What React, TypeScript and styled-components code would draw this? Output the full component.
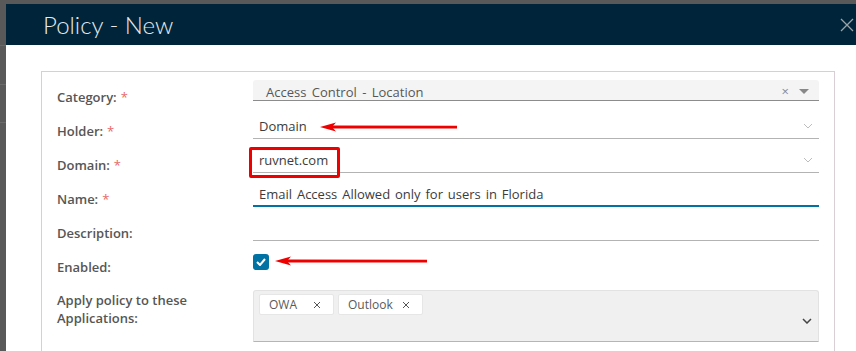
import React from "react";
import styled, { createGlobalStyle } from "styled-components";

const Global = createGlobalStyle`
  html, body { margin: 0; padding: 0; background: #595959; overflow: hidden; }
  body { font-family: "Open Sans", "Noto Sans", sans-serif; }
  #root { height: 351px; }
`;

const Page = styled.div`
  display: flex;
  height: 351px;
  padding-top: 4px;
  box-sizing: border-box;
`;

const Backdrop = styled.div`
  width: 6px;
  flex: none;
  display: flex;
  flex-direction: column;
`;

const BackLine = styled.div<{ $h: number }>`
  height: ${(p) => p.$h}px;
  border-bottom: 1px solid #6a6a6a;
  flex: none;
`;

const Modal = styled.div`
  flex: 1;
  background: #fff;
  display: flex;
  flex-direction: column;
  overflow: hidden;
`;

const Header = styled.div`
  height: 41px;
  flex: none;
  background: #00253a;
  display: flex;
  align-items: center;
  justify-content: space-between;
  padding: 0 2px 0 37px;
`;

const Title = styled.h1`
  margin: 0;
  font-family: Lato, "Noto Sans", sans-serif;
  font-weight: 300;
  font-size: 24px;
  color: #e6e9eb;
`;

const Body = styled.div`
  padding: 26px 21px 0 35px;
  flex: 1;
`;

const Panel = styled.div`
  border: 1px solid #d9ced3;
  border-bottom: none;
  padding: 8px 14px 0 15px;
  height: 300px;
`;

const Row = styled.div<{ $h?: number }>`
  display: grid;
  grid-template-columns: 196px 566px;
  height: ${(p) => p.$h ?? 34}px;
`;

const Label = styled.div<{ $top?: number }>`
  font-size: 13px;
  font-weight: 600;
  color: #565656;
  align-self: ${(p) => (p.$top !== undefined ? "start" : "center")};
  padding-top: ${(p) => p.$top ?? 0}px;
  line-height: 18px;
`;

const Req = styled.span`
  color: #e56a6a;
  margin-left: 4px;
  font-weight: 400;
`;

const Field = styled.div`
  position: relative;
`;

const Underline = styled.div<{ $focus?: boolean }>`
  height: 25px;
  box-sizing: border-box;
  border-bottom: ${(p) => (p.$focus ? "2px solid #0072a3" : "1px solid #b3b3b3")};
  display: flex;
  align-items: center;
  padding: 0 6px;
  font-size: 13px;
  word-spacing: 1.5px;
  color: #3c3c3c;
`;

const Grow = styled.span`
  flex: 1;
`;

const CategoryBox = styled.div`
  height: 21px;
  box-sizing: border-box;
  background: #f4f4f4;
  border-radius: 3px 3px 0 0;
  border-bottom: 1px solid #8c8c8c;
  display: flex;
  align-items: center;
  padding: 3px 10px 0 13px;
  font-size: 13px;
  word-spacing: 2px;
  color: #575757;
  gap: 10px;
`;

const SmallX = styled.span`
  color: #8a8a8a;
  font-size: 13px;
  line-height: 1;
`;

const Caret = styled.span`
  width: 0;
  height: 0;
  border-left: 5px solid transparent;
  border-right: 5px solid transparent;
  border-top: 5px solid #888;
`;

const Highlight = styled.div`
  position: absolute;
  left: -4px;
  top: -1px;
  width: 91px;
  height: 31px;
  box-sizing: border-box;
  border: 3px solid #ee0000;
  border-radius: 2px;
  pointer-events: none;
`;

const ArrowWrap = styled.div`
  position: absolute;
  pointer-events: none;
  line-height: 0;
`;

const CheckBox = styled.div`
  margin-top: 4px;
  width: 16px;
  height: 16px;
  border-radius: 3px;
  background: #0072a3;
  display: flex;
  align-items: center;
  justify-content: center;
`;

const MultiBox = styled.div`
  margin-top: 6px;
  height: 52px;
  box-sizing: border-box;
  background: #f0f0f0;
  border: 1px solid #e2e2e2;
  border-bottom: 1px solid #b5b5b5;
  border-radius: 3px 3px 0 0;
  display: flex;
  align-items: flex-start;
  padding: 3px 6px 0 5px;
  gap: 4px;
`;

const Tag = styled.div`
  height: 21px;
  box-sizing: border-box;
  background: #fff;
  border: 1px solid #e6e6e6;
  border-radius: 2px;
  display: flex;
  align-items: center;
  padding: 0 12px 0 9px;
  font-size: 12px;
  color: #5a5a5a;
`;

const TagText = styled.span<{ $w: number }>`
  width: ${(p) => p.$w}px;
`;

const ChevronSlot = styled.div`
  margin-left: auto;
  align-self: center;
  line-height: 0;
  padding-top: 6px;
`;

const Chevron = ({ color, w = 1 }: { color: string; w?: number }) => (
  <svg width="10" height="6" viewBox="0 0 10 6">
    <path d="M1 1 L5 5 L9 1" fill="none" stroke={color} strokeWidth={w} />
  </svg>
);

const CloseX = () => (
  <svg width="14" height="14" viewBox="0 0 14 14">
    <path d="M1 1 L13 13 M13 1 L1 13" stroke="#9aa3a8" strokeWidth="1.3" />
  </svg>
);

const TagX = () => (
  <svg width="8" height="8" viewBox="0 0 8 8">
    <path d="M1 1 L7 7 M7 1 L1 7" stroke="#555" strokeWidth="1" />
  </svg>
);

const RedArrow = ({ len }: { len: number }) => (
  <svg width={len} height="12" viewBox={`0 0 ${len} 12`}>
    <path d={`M12 4.6 L${len} 4.8 L${len} 7.4 L12 7.6 Z`} fill="#ee0000" />
    <path d="M0 6 L16 1.5 L12 6 L16 10.5 Z" fill="#ee0000" />
  </svg>
);

export default function App() {
  return (
    <>
      <Global />
      <Page>
        <Backdrop>
          <BackLine $h={41} />
          <BackLine $h={38} />
          <BackLine $h={37} />
        </Backdrop>
        <Modal>
          <Header>
            <Title>Policy - New</Title>
            <CloseX />
          </Header>
          <Body>
            <Panel>
              <Row>
                <Label $top={8}>
                  Category:<Req>*</Req>
                </Label>
                <Field>
                  <CategoryBox>
                    <Grow>Access Control - Location</Grow>
                    <SmallX>×</SmallX>
                    <Caret />
                  </CategoryBox>
                </Field>
              </Row>
              <Row>
                <Label>
                  Holder:<Req>*</Req>
                </Label>
                <Field>
                  <Underline>
                    <Grow>Domain</Grow>
                    <Chevron color="#bdbdbd" />
                  </Underline>
                  <ArrowWrap style={{ left: 67, top: 7 }}>
                    <RedArrow len={137} />
                  </ArrowWrap>
                </Field>
              </Row>
              <Row>
                <Label>
                  Domain:<Req>*</Req>
                </Label>
                <Field>
                  <Underline>
                    <Grow>ruvnet.com</Grow>
                    <Chevron color="#bdbdbd" />
                  </Underline>
                  <Highlight />
                </Field>
              </Row>
              <Row>
                <Label>
                  Name:<Req>*</Req>
                </Label>
                <Field>
                  <Underline $focus>
                    <Grow>Email Access Allowed only for users in Florida</Grow>
                  </Underline>
                </Field>
              </Row>
              <Row>
                <Label>Description:</Label>
                <Field>
                  <Underline />
                </Field>
              </Row>
              <Row>
                <Label>Enabled:</Label>
                <Field>
                  <CheckBox>
                    <svg width="10" height="8" viewBox="0 0 10 8">
                      <path d="M1 4 L4 7 L9 1" fill="none" stroke="#fff" strokeWidth="2" />
                    </svg>
                  </CheckBox>
                  <ArrowWrap style={{ left: 22, top: 5 }}>
                    <RedArrow len={152} />
                  </ArrowWrap>
                </Field>
              </Row>
              <Row $h={70}>
                <Label $top={7}>
                  Apply policy to these
                  <br />
                  Applications:
                </Label>
                <Field>
                  <MultiBox>
                    <Tag>
                      <TagText $w={44}>OWA</TagText>
                      <TagX />
                    </Tag>
                    <Tag>
                      <TagText $w={54}>Outlook</TagText>
                      <TagX />
                    </Tag>
                    <ChevronSlot>
                      <Chevron color="#444" w={1.5} />
                    </ChevronSlot>
                  </MultiBox>
                </Field>
              </Row>
            </Panel>
          </Body>
        </Modal>
      </Page>
    </>
  );
}
